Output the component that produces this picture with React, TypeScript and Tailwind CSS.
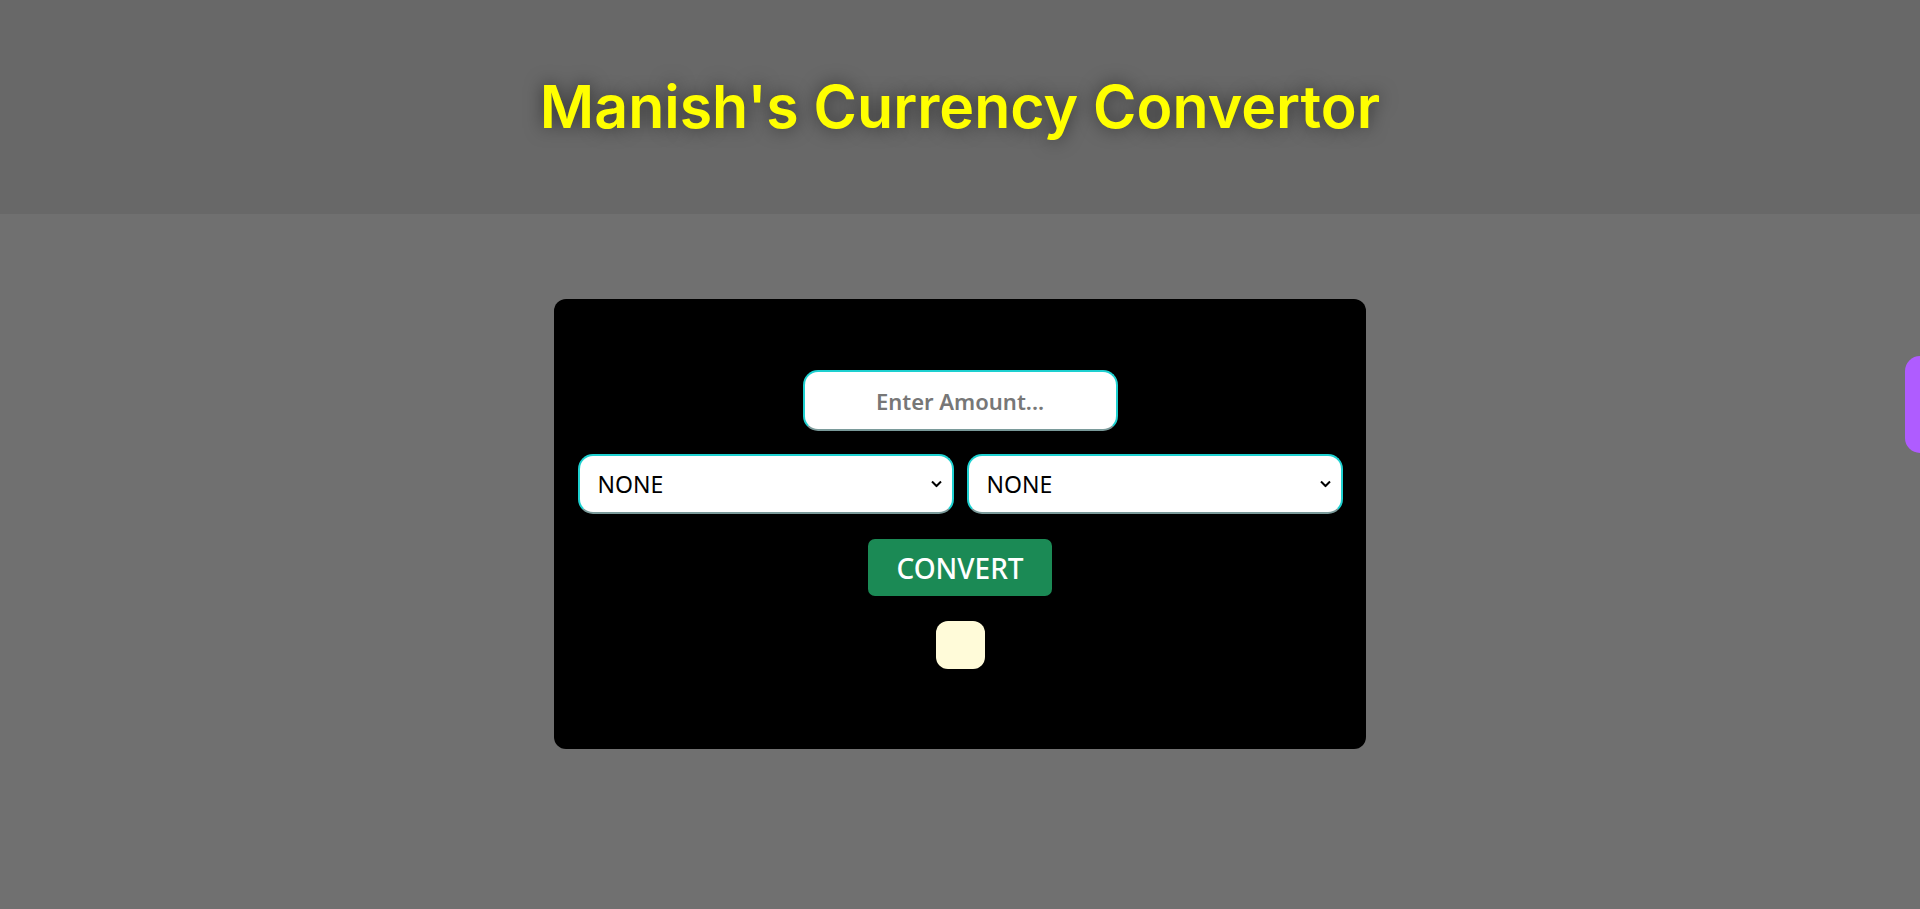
import React, { useState } from 'react';

const currencies = ['NONE', 'USD', 'INR', 'EUR', 'GBP', 'JPY'];

function CurrencySelect({
  value,
  onChange,
}: {
  value: string;
  onChange: (v: string) => void;
}) {
  return (
    <div className="relative w-[376px] h-[60px]">
      <select
        value={value}
        onChange={(e) => onChange(e.target.value)}
        className="appearance-none w-full h-full bg-white text-black rounded-[15px] border-2 border-[#1ed0d0] border-b-[#7a9a9a] pl-[18px] pr-10 text-[23px] outline-none"
      >
        {currencies.map((c) => (
          <option key={c} value={c}>
            {c}
          </option>
        ))}
      </select>
      <svg
        className="pointer-events-none absolute right-[12px] top-1/2 -translate-y-1/2"
        width="11"
        height="7"
        viewBox="0 0 11 7"
        fill="none"
      >
        <path d="M1 1l4.5 4.5L10 1" stroke="#000" strokeWidth="2" />
      </svg>
    </div>
  );
}

export default function App() {
  const [amount, setAmount] = useState('');
  const [from, setFrom] = useState('NONE');
  const [to, setTo] = useState('NONE');

  return (
    <div className="min-h-[909px] bg-[#707070] font-['Noto_Sans',sans-serif]">
      <header className="h-[214px] bg-[#686868] flex items-center justify-center">
        <h1 className="font-['Inter',sans-serif] font-semibold text-[59px] text-[#ffff00] [text-shadow:0_0_18px_rgba(0,0,0,0.55)]">
          Manish's Currency Convertor
        </h1>
      </header>

      <main className="flex justify-center pt-[85px]">
        <section className="w-[812px] h-[450px] bg-black rounded-[12px] flex flex-col items-center pt-[71px]">
          <input
            type="text"
            value={amount}
            onChange={(e) => setAmount(e.target.value)}
            placeholder="Enter Amount..."
            className="w-[315px] h-[61px] bg-white rounded-[15px] border-2 border-[#1ed0d0] border-b-[#7a9a9a] text-center text-[22px] font-semibold text-black placeholder:text-[#777777] outline-none"
          />
          <div className="flex gap-[13px] mt-[23px]">
            <CurrencySelect value={from} onChange={setFrom} />
            <CurrencySelect value={to} onChange={setTo} />
          </div>
          <button className="mt-[25px] w-[184px] h-[57px] bg-[#1b8a55] rounded-[7px] text-white text-[28px] font-medium">
            CONVERT
          </button>
          <div className="mt-[25px] w-[49px] h-[48px] rounded-[12px] bg-[#fffbd9]" />
        </section>
      </main>

      <div className="fixed right-0 top-[356px] w-[15px] h-[97px] bg-[#af5cff] rounded-l-[15px]" />
    </div>
  );
}
